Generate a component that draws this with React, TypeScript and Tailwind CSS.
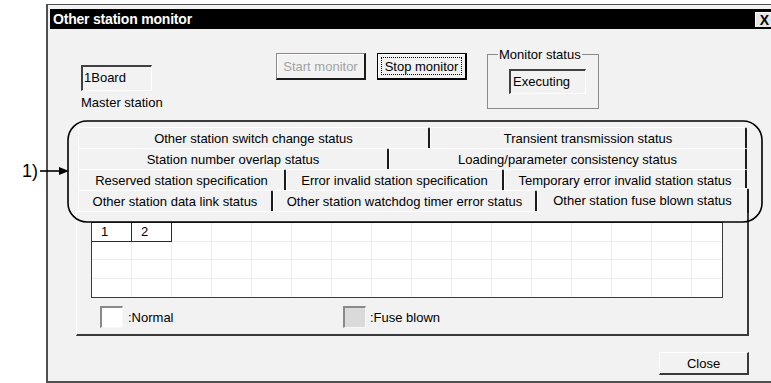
import React from "react";

const font = { fontFamily: '"Liberation Sans", Arial, sans-serif' };

function Tab({ label, className }: { label: string; className: string }) {
  return (
    <div
      className={`flex h-full items-center justify-center border-t border-l border-white border-r-2 border-r-[#1c1c1c] rounded-tr-[2px] text-[13px] leading-none text-black whitespace-nowrap ${className}`}
    >
      {label}
    </div>
  );
}

export default function App() {
  const rows = [0, 1, 2, 3];
  const cols = Array.from({ length: 16 }, (_, i) => i);
  return (
    <div className="relative w-[771px] h-[383px] overflow-hidden bg-white" style={font}>
      {/* Window */}
      <div className="ml-[46px] mt-[4px] w-[735px] h-[379px] border-l-2 border-t border-b-2 border-[#505050] bg-[#f2f2f2] pt-[4px] px-[2px]">
        {/* Title bar */}
        <div className="flex h-[20px] items-center justify-between bg-black pl-[3px]">
          <span className="text-[14px] font-bold text-white leading-none tracking-[-0.2px]">Other station monitor</span>
          <div className="mr-[6px] flex h-[15px] w-[18px] items-center justify-center border-t border-l border-white bg-[#e6e6e6] text-[14px] font-bold leading-none text-black">
            X
          </div>
        </div>

        {/* Body */}
        <div className="flex flex-col">
          {/* Top controls */}
          <div className="mt-[24px] flex items-start pl-[31px]">
            <div className="mt-[12px] flex w-[71px] flex-col">
              <div className="flex h-[26px] w-[71px] items-center border-t-2 border-l-2 border-[#404040] border-r border-b border-r-white border-b-white pl-[1px] pb-[2px] text-[13px] leading-none">
                1Board
              </div>
              <div className="mt-[4px] whitespace-nowrap text-[13px] leading-[16px]">Master station</div>
            </div>
            <div className="ml-[124px] flex h-[27px] w-[90px] items-center justify-center border border-[#8a8a8a] border-r-2 border-b-2 border-r-[#1a1a1a] border-b-[#1a1a1a] shadow-[inset_1px_1px_0_#ffffff] text-[13px] leading-none text-[#a3a3a3]">
              Start monitor
            </div>
            <div className="ml-[11px] flex h-[27px] w-[90px] items-center justify-center border border-black border-r-2 border-b-2 shadow-[inset_1px_1px_0_#ffffff] p-[3px]">
              <div className="flex h-full w-full items-center justify-center border border-dotted border-black text-[13px] leading-none">
                Stop monitor
              </div>
            </div>
            <div className="relative ml-[20px] mt-[1px] h-[55px] w-[112px] border border-[#8a8a8a]">
              <span className="absolute left-[10px] top-[-8px] bg-[#f2f2f2] px-[1px] text-[13px] leading-[15px]">Monitor status</span>
              <div className="ml-[21px] mt-[14px] flex h-[25px] w-[77px] items-center border-t-2 border-l-2 border-[#404040] border-r border-b border-r-white border-b-white pl-[2px] pb-[2px] text-[13px] leading-none">
                Executing
              </div>
            </div>
          </div>

          {/* Tab control */}
          <div className="ml-[26px] mt-[16px] w-[673px]">
            <div className="flex flex-col px-[2px]">
              <div className="flex h-[21px]">
                <Tab label="Other station switch change status" className="w-[352px]" />
                <Tab label="Transient transmission status" className="flex-1" />
              </div>
              <div className="flex h-[21px]">
                <Tab label="Station number overlap status" className="w-[311px]" />
                <Tab label="Loading/parameter consistency status" className="flex-1" />
              </div>
              <div className="flex h-[21px]">
                <Tab label="Reserved station specification" className="w-[208px]" />
                <Tab label="Error invalid station specification" className="w-[218px]" />
                <Tab label="Temporary error invalid station status" className="flex-1" />
              </div>
              <div className="flex h-[21px]">
                <Tab label="Other station data link status" className="w-[195px]" />
                <Tab label="Other station watchdog timer error status" className="w-[264px]" />
                <div className="relative z-10 -mt-[2px] -mr-[2px] flex h-[25px] flex-1 items-center justify-center border-t border-l border-white border-r-2 border-r-[#1c1c1c] rounded-tr-[2px] bg-[#f2f2f2] pb-[2px] text-[13px] leading-none whitespace-nowrap">
                  Other station fuse blown status
                </div>
              </div>
            </div>

            {/* Panel */}
            <div className="h-[125px] border-t border-l border-white border-r-2 border-b-2 border-r-[#3a3a3a] border-b-[#3a3a3a]">
              <div className="ml-[14px] mt-[10px] grid h-[76px] w-[632px] grid-cols-[repeat(15,40px)_1fr] grid-rows-4 border border-[#3a3a3a] bg-white">
                {rows.map((r) =>
                  cols.map((c) => {
                    const header = r === 0 && c < 2;
                    const lastCol = c === 15;
                    const lastRow = r === 3;
                    return (
                      <div
                        key={`${r}-${c}`}
                        className={
                          header
                            ? "flex items-center border-r border-b border-[#2a2a2a] pl-[9px] text-[13px] leading-none"
                            : lastCol && lastRow
                            ? ""
                            : lastCol
                            ? "border-b border-[#ececec]"
                            : lastRow
                            ? "border-r border-[#ececec]"
                            : "border-r border-b border-[#ececec]"
                        }
                      >
                        {header ? String(c + 1) : null}
                      </div>
                    );
                  })
                )}
              </div>
              <div className="ml-[23px] mt-[8px] flex items-center">
                <div className="flex w-[243px] items-center">
                  <div className="h-[22px] w-[23px] border-t-2 border-l-2 border-[#8a8a8a] border-r border-b border-r-[#f8f8f8] border-b-[#f8f8f8] bg-white" />
                  <span className="ml-[5px] text-[13px] leading-none">:Normal</span>
                </div>
                <div className="flex items-center">
                  <div className="h-[22px] w-[23px] border-t-2 border-l-2 border-[#8a8a8a] border-r border-b border-r-[#f8f8f8] border-b-[#f8f8f8] bg-[#dadada]" />
                  <span className="ml-[4px] text-[13px] leading-none">:Fuse blown</span>
                </div>
              </div>
            </div>

            <div className="mt-[16px] flex justify-end">
              <div className="flex h-[23px] w-[90px] items-center justify-center border-t border-l border-white border-r-2 border-b-2 border-r-[#3a3a3a] border-b-[#3a3a3a] text-[13px] leading-none">
                Close
              </div>
            </div>
          </div>
        </div>
      </div>

      {/* Annotation: bracket around tab rows */}
      <svg className="absolute left-[67px] top-[120px]" width="696" height="103" viewBox="0 0 696 103">
        <rect x="1" y="1" width="694" height="101" rx="19" ry="19" fill="none" stroke="#000" strokeWidth="1.6" />
      </svg>
      <span className="absolute left-[22px] top-[161px] text-[18px] leading-[20px] text-black">1)</span>
      <svg className="absolute left-[40px] top-[165px]" width="30" height="12" viewBox="0 0 30 12">
        <line x1="0" y1="6" x2="22" y2="6" stroke="#000" strokeWidth="1.6" />
        <polygon points="19,2 29,6 19,10" fill="#000" />
      </svg>
    </div>
  );
}
